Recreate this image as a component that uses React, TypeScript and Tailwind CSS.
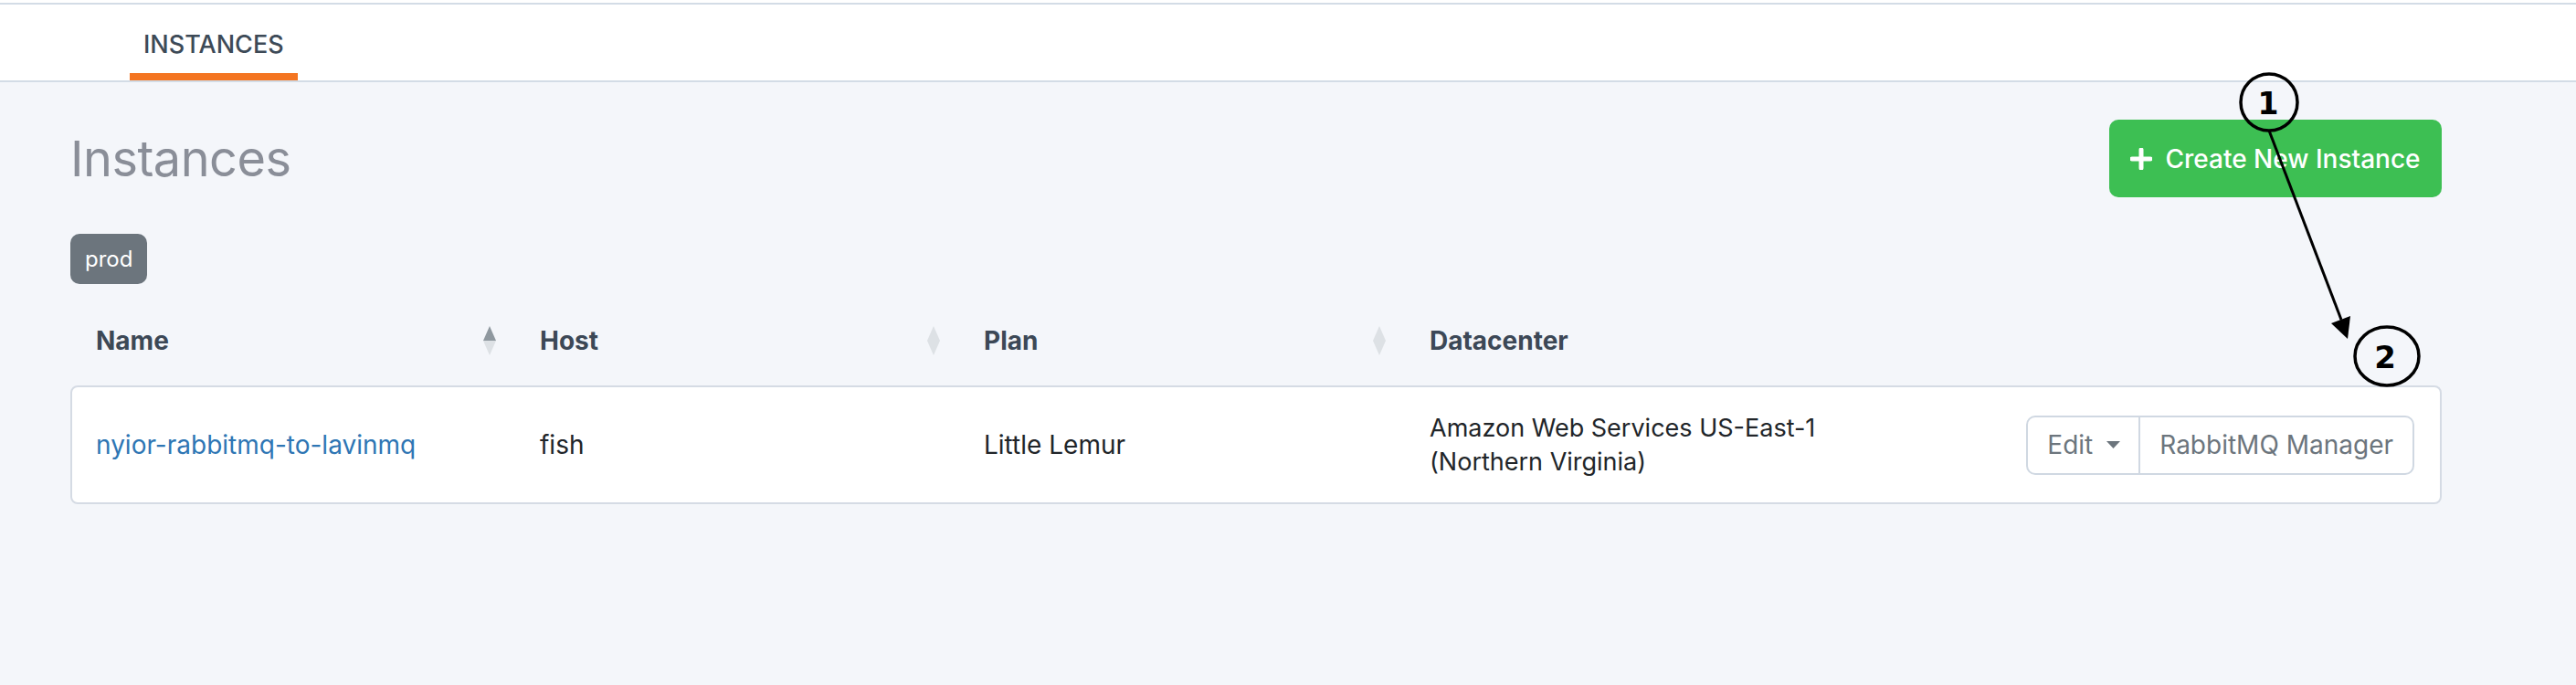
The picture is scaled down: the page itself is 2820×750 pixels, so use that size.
import React from "react";

const SortIcon = ({ active }: { active?: boolean }) => (
    <svg width="14" height="32" viewBox="0 0 14 32" className="shrink-0">
        <path d="M7 0 L14 16 L0 16 Z" fill={active ? "#8f989f" : "#dde1e5"} />
        <path d="M0 16 L14 16 L7 32 Z" fill="#dde1e5" />
    </svg>
);

const HeaderCell = ({ label, active }: { label: string; active?: boolean }) => (
    <div className="flex items-center justify-between pl-[26px] pr-[22px]">
        <span>{label}</span>
        <SortIcon active={active} />
    </div>
);

const Annotations = () => (
    <svg
        className="pointer-events-none absolute left-0 top-0"
        width="2820"
        height="750"
        viewBox="0 0 2820 750"
    >
        <circle cx="2484" cy="112" r="31" fill="none" stroke="#000" strokeWidth="3.5" />
        <text
            x="2483"
            y="125"
            textAnchor="middle"
            fontFamily="'DejaVu Sans', sans-serif"
            fontWeight="700"
            fontSize="33"
            fill="#000"
        >
            1
        </text>
        <line x1="2484" y1="143" x2="2563" y2="350" stroke="#000" strokeWidth="3" />
        <path d="M2570 371 L2552 354 L2573 346 Z" fill="#000" />
        <ellipse cx="2613" cy="390" rx="35" ry="32" fill="none" stroke="#000" strokeWidth="3.5" />
        <text
            x="2611"
            y="403"
            textAnchor="middle"
            fontFamily="'DejaVu Sans', sans-serif"
            fontWeight="700"
            fontSize="34"
            fill="#000"
        >
            2
        </text>
    </svg>
);

export default function App() {
    return (
        <div
            className="relative min-h-[750px] w-[2820px] bg-[#f4f6fa] text-[#212529]"
            style={{ fontFamily: "Inter, 'Liberation Sans', sans-serif" }}
        >
            <div className="h-[5px] bg-white border-b-2 border-[#d3dce6]" />
            <nav className="flex h-[85px] items-end bg-white border-b-2 border-[#d3dce6] pl-[142px]">
                <div className="flex h-full flex-col items-center justify-between">
                    <span className="mt-[30px] px-[15px] text-[27px] font-medium leading-none text-[#3d4a57]">
                        INSTANCES
                    </span>
                    <div className="h-[8px] w-full bg-[#f47521]" />
                </div>
            </nav>

            <main className="pl-[77px] pr-[147px] pt-[41px]">
                <div className="flex items-center justify-between">
                    <h1 className="text-[54px] font-normal leading-none tracking-[-0.5px] text-[#8a8e98]">
                        Instances
                    </h1>
                    <button className="flex h-[85px] w-[364px] items-center justify-center gap-[14px] rounded-[10px] bg-[#3dbf53] text-[28px] font-medium text-white">
                        <svg width="24" height="24" viewBox="0 0 24 24">
                            <path d="M12 2 V22 M2 12 H22" stroke="#fff" strokeWidth="5" strokeLinecap="round" />
                        </svg>
                        Create New Instance
                    </button>
                </div>

                <div className="mt-[40px] flex">
                    <span className="flex h-[55px] items-center rounded-[10px] bg-[#6c757d] px-[16px] text-[24px] text-white">
                        prod
                    </span>
                </div>

                <div className="mt-[41px] grid h-[40px] grid-cols-[486px_486px_488px_1fr] items-center border-x-2 border-transparent text-[28px] font-bold text-[#3c4856]">
                    <HeaderCell label="Name" active />
                    <HeaderCell label="Host" />
                    <HeaderCell label="Plan" />
                    <div className="pl-[26px]">Datacenter</div>
                </div>

                <div className="mt-[30px] grid h-[130px] grid-cols-[486px_486px_488px_1fr] items-center rounded-[8px] border-2 border-[#d5dbe4] bg-white text-[28px]">
                    <div className="pl-[26px]">
                        <a className="text-[#2e76b4]">nyior-rabbitmq-to-lavinmq</a>
                    </div>
                    <div className="pl-[26px]">fish</div>
                    <div className="pl-[26px]">Little Lemur</div>
                    <div className="flex items-center justify-between pr-[28px]">
                        <div className="w-[480px] pl-[26px] text-[27px] leading-[37px]">
                            Amazon Web Services US-East-1 (Northern Virginia)
                        </div>
                        <div className="flex h-[65px] text-[28px] text-[#6c757d]">
                            <button className="flex items-center gap-[15px] rounded-l-[10px] border-2 border-[#d0d8e2] pl-[21px] pr-[20px]">
                                Edit
                                <svg width="15" height="8" viewBox="0 0 15 8">
                                    <path d="M0 0 H15 L7.5 8 Z" fill="#6c757d" />
                                </svg>
                            </button>
                            <button className="-ml-[2px] rounded-r-[10px] border-2 border-[#d0d8e2] px-[21px]">
                                RabbitMQ Manager
                            </button>
                        </div>
                    </div>
                </div>
            </main>

            <Annotations />
        </div>
    );
}
